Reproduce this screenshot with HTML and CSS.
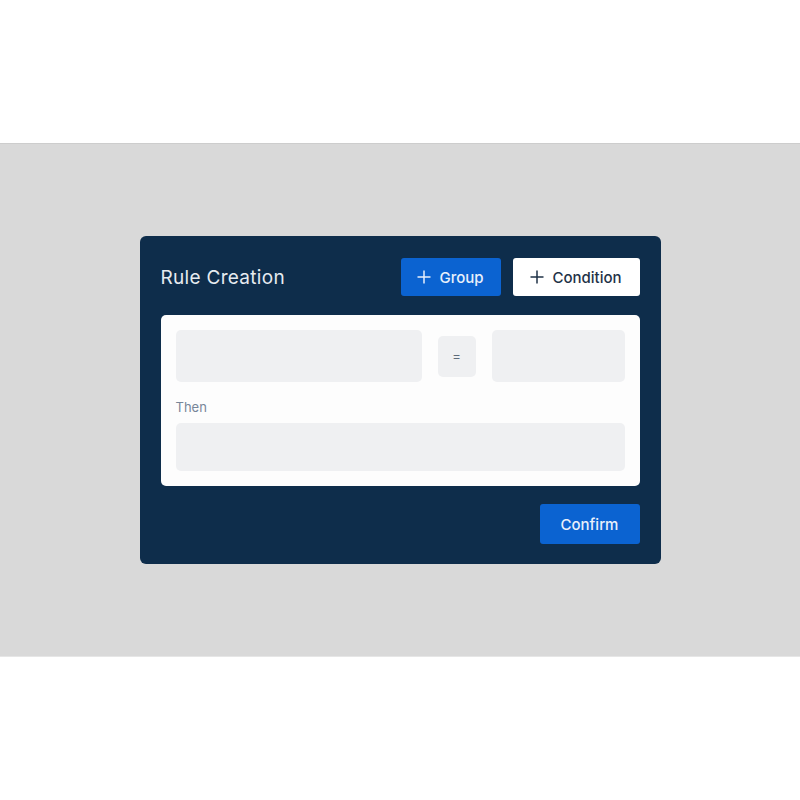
FILE: index.html
```html
<!DOCTYPE html>
<html lang="en">
<head>
<meta charset="utf-8">
<title>Rule Creation</title>
<link rel="stylesheet" href="styles.css">
</head>
<body>
  <div class="stage">
    <section class="rule-card">
      <header class="rule-head">
        <h1 class="rule-title">Rule Creation</h1>
        <div class="rule-actions">
          <button class="btn btn-primary">
            <svg class="plus" viewBox="0 0 14 14" width="14" height="14"><path d="M7 0.5v13M0.5 7h13" /></svg>
            Group
          </button>
          <button class="btn btn-light">
            <svg class="plus" viewBox="0 0 14 14" width="14" height="14"><path d="M7 0.5v13M0.5 7h13" /></svg>
            Condition
          </button>
        </div>
      </header>
      <div class="rule-body">
        <div class="cond-row">
          <div class="field field-left"></div>
          <div class="op">=</div>
          <div class="field field-right"></div>
        </div>
        <div class="then-label">Then</div>
        <div class="field field-then"></div>
      </div>
      <footer class="rule-foot">
        <button class="btn btn-primary btn-confirm">Confirm</button>
      </footer>
    </section>
  </div>
</body>
</html>
```

FILE: styles.css
```css
html, body {
  margin: 0;
  padding: 0;
  background: #ffffff;
  font-family: Inter, "Noto Sans", "Liberation Sans", sans-serif;
}

.stage {
  margin-top: 143px;
  height: 514px;
  box-sizing: border-box;
  background: #d9d9d9;
  border-top: 1px solid #cdcdcd;
  border-bottom: 1px solid #e6e6e6;
  display: flex;
  align-items: center;
  justify-content: center;
}

.rule-card {
  width: 521px;
  box-sizing: border-box;
  background: #0e2d4b;
  border-radius: 6px;
  padding: 22px 21px 20px 21px;
  display: flex;
  flex-direction: column;
}

.rule-head {
  display: flex;
  align-items: center;
  justify-content: space-between;
  height: 38px;
}

.rule-title {
  margin: 0;
  font-size: 19px;
  font-weight: 400;
  color: #e6ebf0;
  letter-spacing: 0.3px;
}

.rule-actions {
  display: flex;
  gap: 12px;
}

.btn {
  font-family: inherit;
  border: none;
  border-radius: 3px;
  font-size: 15px;
  font-weight: 500;
  height: 38px;
  display: inline-flex;
  align-items: center;
  justify-content: center;
  gap: 8px;
  cursor: pointer;
}

.btn-primary {
  background: #0b63d1;
  color: #e8f0fb;
  width: 100px;
}

.btn-light {
  background: #ffffff;
  color: #1f3247;
  width: 127px;
}

.plus {
  fill: none;
  stroke: currentColor;
  stroke-width: 1.5;
}

.rule-body {
  margin-top: 19px;
  background: #fdfdfd;
  border-radius: 5px;
  padding: 15px;
  display: flex;
  flex-direction: column;
}

.cond-row {
  display: flex;
  align-items: center;
  gap: 16px;
}

.field {
  background: #eff0f2;
  border-radius: 5px;
}

.field-left {
  width: 246px;
  height: 52px;
}

.field-right {
  flex: 1;
  height: 52px;
}

.op {
  width: 38px;
  height: 41px;
  background: #eff0f2;
  border-radius: 5px;
  display: flex;
  align-items: center;
  justify-content: center;
  font-size: 13px;
  color: #5d6b7a;
}

.then-label {
  margin-top: 17px;
  font-size: 13px;
  color: #778699;
  line-height: 16px;
}

.field-then {
  margin-top: 8px;
  height: 48px;
}

.rule-foot {
  margin-top: 18px;
  display: flex;
  justify-content: flex-end;
}

.btn-confirm {
  height: 40px;
  width: 100px;
}
```
